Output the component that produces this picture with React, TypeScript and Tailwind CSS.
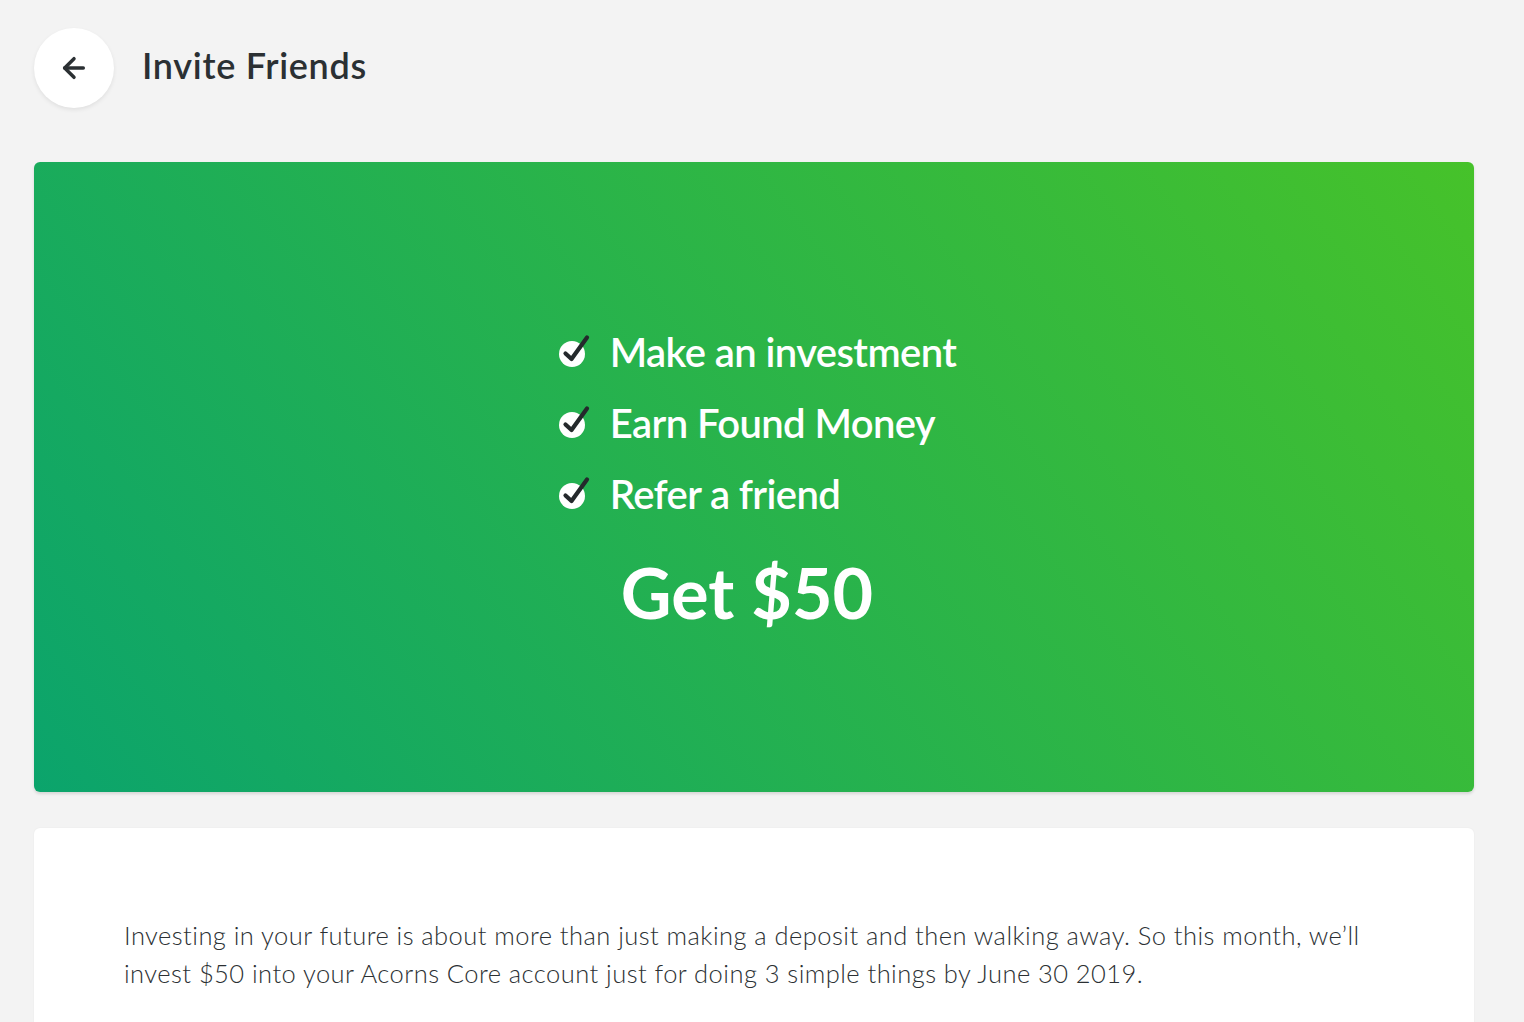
import { ArrowLeft } from "lucide-react";

const steps = ["Make an investment", "Earn Found Money", "Refer a friend"];

function CheckBadge() {
  return (
    <svg width="36" height="36" viewBox="0 0 36 36" className="shrink-0">
      <circle cx="14" cy="20" r="13" fill="#ffffff" />
      <path
        d="M7.5 19.5 L13.5 25 L29 3.5"
        fill="none"
        stroke="#24292c"
        strokeWidth="4.2"
        strokeLinecap="round"
        strokeLinejoin="round"
      />
    </svg>
  );
}

export default function App() {
  return (
    <div
      className="min-h-screen bg-[#f3f3f3] pl-[34px] pr-[50px] pt-[28px]"
      style={{ fontFamily: "Lato, 'Noto Sans', sans-serif" }}
    >
      <header className="flex items-center gap-[28px]">
        <button className="flex h-[80px] w-[80px] items-center justify-center rounded-full bg-white shadow-[0_2px_4px_rgba(0,0,0,0.08)]">
          <ArrowLeft size={32} strokeWidth={2.6} color="#2b3033" />
        </button>
        <h1 className="pb-[7px] text-[36px] font-semibold tracking-[0.7px] text-[#2b3033]">Invite Friends</h1>
      </header>

      <section className="mt-[54px] flex h-[630px] flex-col items-center justify-center rounded-[6px] bg-[linear-gradient(53deg,#0ba46c,#46c22a)] shadow-[0_2px_3px_rgba(0,0,0,0.12)]">
        <div className="flex flex-col gap-[22px] pl-[6px]">
          {steps.map((s) => (
            <div key={s} className="flex h-[49px] items-center gap-[16px]">
              <CheckBadge />
              <span className="text-[40px] font-semibold leading-none tracking-[-0.6px] text-white">{s}</span>
            </div>
          ))}
        </div>
        <div className="mt-[38px] pr-[14px] text-[70px] font-bold leading-none text-white">Get $50</div>
      </section>

      <section className="mt-[36px] rounded-t-[6px] bg-white px-[90px] pb-[40px] pt-[88px] shadow-[0_0_2px_rgba(0,0,0,0.06)]">
        <p className="text-[25.5px] font-light leading-[38px] tracking-[0.45px] text-[#2b3033]">
          Investing in your future is about more than just making a deposit and then walking away. So this month, we’ll invest $50 into your Acorns Core account just for doing 3 simple things by June 30 2019.
        </p>
      </section>
    </div>
  );
}
